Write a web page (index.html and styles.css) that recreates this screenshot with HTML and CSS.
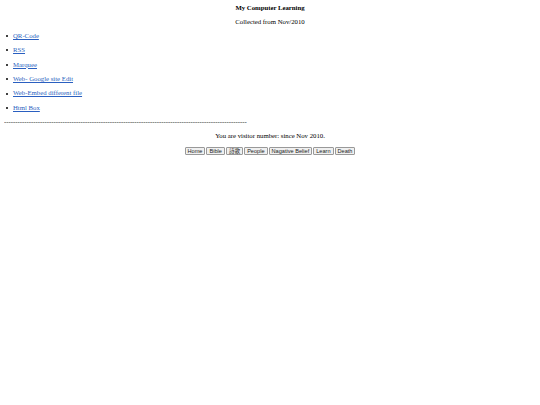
FILE: index.html
```html
<!DOCTYPE html>
<html>
<head>
<meta charset="utf-8">
<title>My Computer Learning</title>
<link rel="stylesheet" href="styles.css">
</head>
<body>
<div class="title">My Computer Learning</div>
<div class="line center">Collected from Nov/2010</div>
<ul class="links">
<li><a href="#">QR-Code</a></li>
<li><a href="#">RSS</a></li>
<li><a href="#">Marquee</a></li>
<li><a href="#">Web- Google site Edit</a></li>
<li><a href="#">Web-Embed different file</a></li>
<li><a href="#">Html Box</a></li>
</ul>
<div class="line">------------------------------------------------------------------------------------------------------------</div>
<div class="line center visitor">You are visitor number: since Nov 2010.</div>
<div class="nav">
<button class="btn">Home</button>
<button class="btn">Bible</button>
<button class="btn cjk">詩歌</button>
<button class="btn">People</button>
<button class="btn">Nagative Belief</button>
<button class="btn">Learn</button>
<button class="btn">Death</button>
</div>
</body>
</html>
```
FILE: styles.css
```css
html, body {
  background: #ffffff;
}
body {
  margin: 0 4px;
  font-family: "Liberation Serif", "Times New Roman", serif;
  font-size: 6.75px;
  line-height: 14.4px;
  color: #000000;
}
.title {
  font-weight: bold;
  text-align: center;
  padding-top: 1px;
}
.line {
  margin: 0;
}
.center {
  text-align: center;
}
.visitor {
  margin-top: -1px;
}
.links {
  margin: -1px 0 0 0;
  padding: 0;
  list-style: none;
}
.links li {
  display: flex;
  align-items: center;
  margin: 0;
}
.links li::before {
  content: "";
  width: 2px;
  height: 2px;
  border-radius: 50%;
  background: #000000;
  margin: 0 5px 0 2px;
  flex: none;
}
.links a {
  color: #2a5fc0;
  text-decoration: underline;
}
.nav {
  display: flex;
  justify-content: center;
  gap: 1px;
  margin-top: 3.5px;
}
.btn {
  font-family: "Liberation Sans", Arial, sans-serif;
  font-size: 5.6px;
  line-height: 6px;
  height: 8.5px;
  padding: 0 2px;
  margin: 0;
  border: 1px solid #999999;
  border-radius: 1px;
  background: #f0f0f0;
  color: #222222;
}
.cjk {
  font-family: "Liberation Sans", "Noto Sans CJK TC", sans-serif;
}
```
